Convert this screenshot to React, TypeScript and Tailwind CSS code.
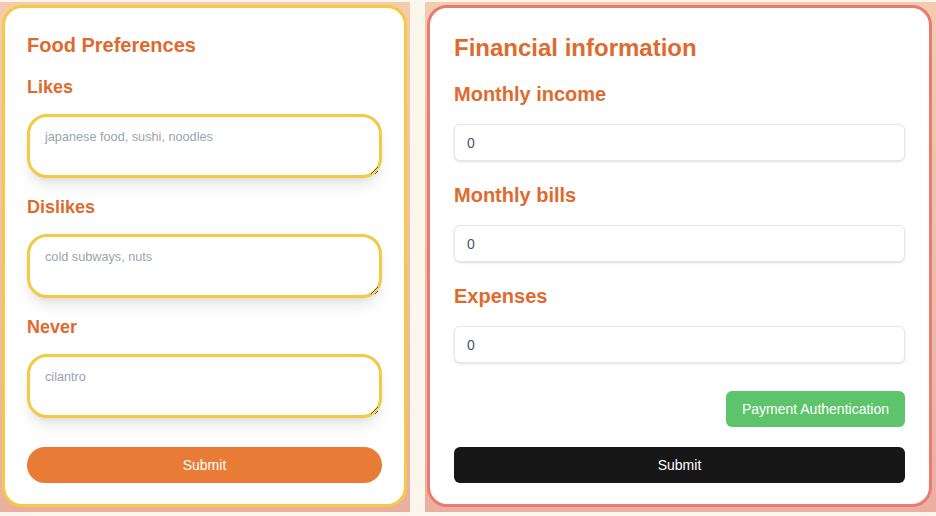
import React, { useState } from "react";

const Label: React.FC<{ text: string; className?: string }> = ({ text, className }) => (
  <h3 className={`text-lg leading-7 font-bold text-[#df6a2e] ${className ?? ""}`}>{text}</h3>
);

const PrefField: React.FC<{ label: string; placeholder: string; first?: boolean }> = ({
  label,
  placeholder,
  first,
}) => (
  <div className={first ? "mt-[14px]" : "mt-[15px]"}>
    <Label text={label} />
    <textarea
      placeholder={placeholder}
      className="mt-[13px] block h-16 w-full rounded-[20px] border-[3px] border-[#f4c943] bg-white px-[15px] py-3 text-[12.7px] leading-4 text-gray-700 placeholder:text-[#9ca3af] shadow-lg outline-none"
    />
  </div>
);

const MoneyField: React.FC<{ label: string; value: string; onChange: (v: string) => void; first?: boolean }> = ({
  label,
  value,
  onChange,
  first,
}) => (
  <div className={first ? "mt-4" : "mt-5"}>
    <h3 className="text-xl leading-7 font-bold text-[#df6a2e]">{label}</h3>
    <input
      type="text"
      value={value}
      onChange={(e) => onChange(e.target.value)}
      className="mt-4 block h-[37px] w-full rounded-md border border-[#e5e7eb] bg-white px-3 text-sm text-[#475569] shadow-sm outline-none"
    />
  </div>
);

const App: React.FC = () => {
  const [income, setIncome] = useState("0");
  const [bills, setBills] = useState("0");
  const [expenses, setExpenses] = useState("0");

  return (
    <div className="flex h-[516px] w-[936px] gap-[15px] bg-[#fbf6eb] pt-[2px] font-['Liberation_Sans',Arial,sans-serif]">
      {/* food side */}
      <div className="h-[510px] w-[410px] bg-gradient-to-b from-[#f5cbb0] to-[#ebafa1] pt-[3px] pl-[2px] pr-[3px] pb-[5px]">
        <div className="flex h-full flex-col rounded-[20px] border-[3px] border-[#f4c943] bg-white px-[22px] pt-[23px]">
          <h2 className="text-xl leading-7 font-bold text-[#df6a2e]">Food Preferences</h2>
          <PrefField first label="Likes" placeholder="japanese food, sushi, noodles" />
          <PrefField label="Dislikes" placeholder="cold subways, nuts" />
          <PrefField label="Never" placeholder="cilantro" />
          <button className="mt-[29px] h-9 w-full rounded-full bg-[#e87b35] text-sm text-white">
            Submit
          </button>
        </div>
      </div>

      {/* money side */}
      <div className="h-[510px] flex-1 bg-gradient-to-b from-[#f5cbb0] to-[#ebafa1] pt-[3px] pl-[2px] pr-[4px] pb-[5px]">
        <div className="flex h-full flex-col rounded-[20px] border-[3px] border-[#e87b72] bg-white px-6 pt-6">
          <h2 className="text-2xl leading-8 font-bold text-[#df6a2e]">Financial information</h2>
          <MoneyField first label="Monthly income" value={income} onChange={setIncome} />
          <MoneyField label="Monthly bills" value={bills} onChange={setBills} />
          <MoneyField label="Expenses" value={expenses} onChange={setExpenses} />
          <button className="mt-7 h-9 self-end rounded-md bg-[#5ec46b] px-4 text-sm text-white">
            Payment Authentication
          </button>
          <button className="mt-5 h-9 w-full rounded-md bg-[#171717] text-sm text-white">Submit</button>
        </div>
      </div>
    </div>
  );
};

export default App;
